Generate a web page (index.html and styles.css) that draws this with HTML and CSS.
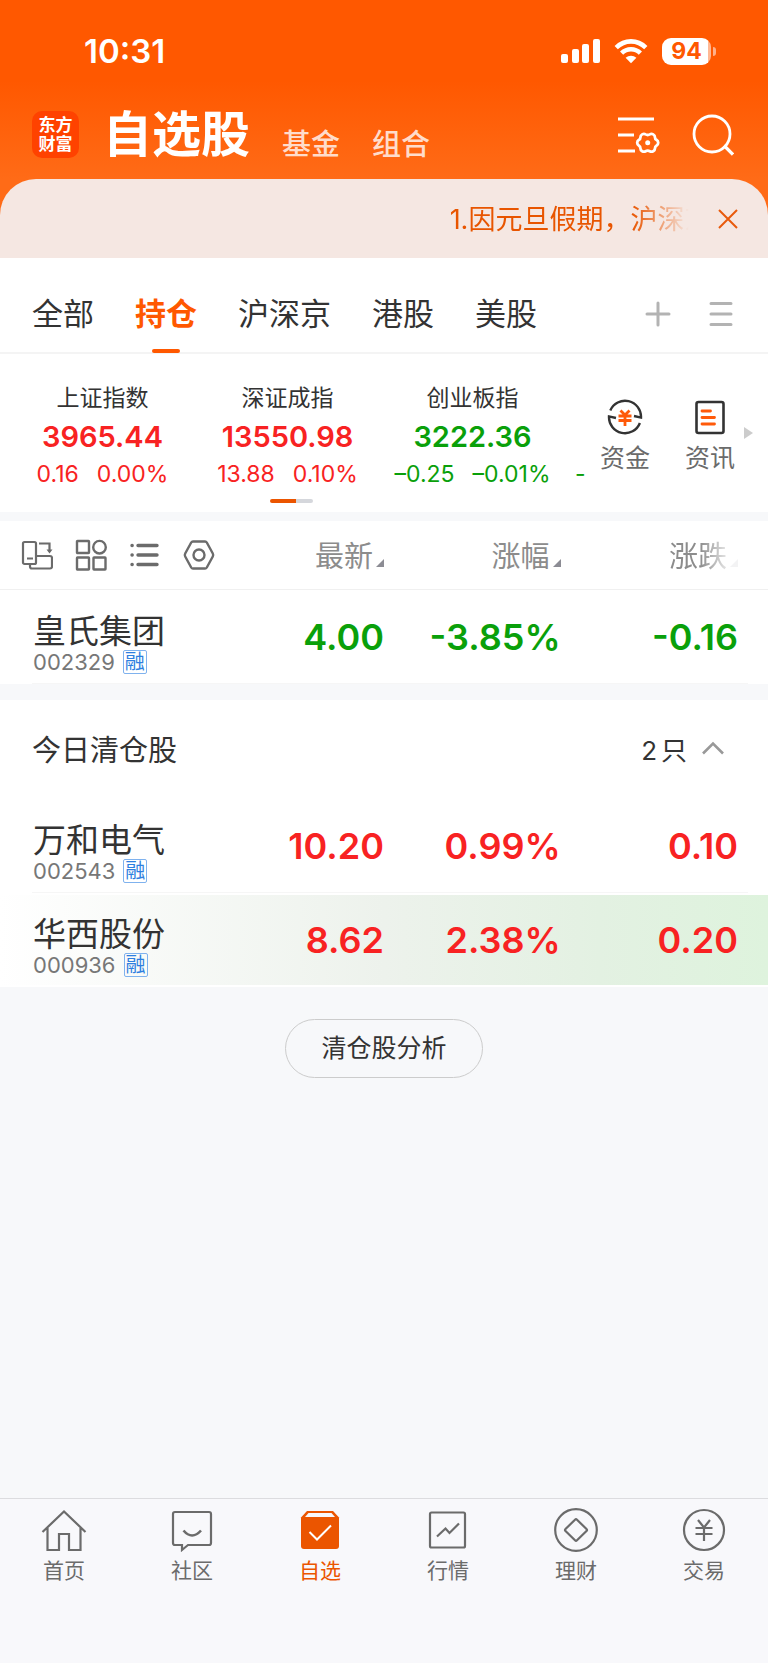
FILE: index.html
```
<!DOCTYPE html>
<html lang="zh-CN">

<head>
    <meta charset="UTF-8">
    <meta name="viewport" content="width=device-width, initial-scale=1">
    <title>自选股</title>
    <link rel="stylesheet" href="styles.css">
</head>

<body>
    <header class="header">
        <!-- 状态栏 -->
        <div class="status-bar">
            <span class="status-time">10:31</span>
            <div class="status-icons">
                <svg width="39" height="25" viewBox="0 0 39 25" fill="#fff">
                    <rect x="0" y="15" width="7" height="9" rx="2" />
                    <rect x="11" y="10" width="7" height="14" rx="2" />
                    <rect x="21" y="5" width="7" height="19" rx="2" />
                    <rect x="32" y="0" width="7" height="24" rx="2" />
                </svg>
                <svg width="34" height="25" viewBox="0 0 34 25" fill="none" stroke="#fff" stroke-width="4.6">
                    <path d="M2.2 8.6C10.6 .3 23.4 .3 31.8 8.6" />
                    <path d="M7.6 14.2C13 9 21 9 26.4 14.2" />
                    <path d="M17 24.2l-5.4-5.4c3.2-2.8 7.6-2.8 10.8 0z" fill="#fff" stroke="none" />
                </svg>
                <span class="battery"><span class="battery-level">94</span></span>
            </div>
        </div>

        <!-- 标题栏 -->
        <div class="title-bar">
            <a href="#" class="logo"><span>东方</span><span>财富</span></a>
            <h1 class="title">自选股</h1>
            <a href="#" class="title-link">基金</a>
            <a href="#" class="title-link">组合</a>
            <div class="title-actions">
                <button type="button" class="icon-btn" aria-label="设置">
                    <svg width="42" height="40" viewBox="0 0 42 40" fill="none" stroke="#fff" stroke-width="2.8">
                        <path d="M0 4h36M0 20h16M0 36h17" />
                        <path d="M40.200 27.800Q40.200 29.800 38.400 30.800Q37 31.600 37 33.200Q37 35.200 35.200 36.200Q33.400 37.200 31.800 36.200Q29.700 35 27.600 36.200Q26 37.200 24.200 36.200Q22.400 35.200 22.400 33.200Q22.400 31.600 21 30.800Q19.200 29.800 19.200 27.800Q19.200 25.800 21 24.800Q22.400 24 22.400 22.400Q22.400 20.400 24.200 19.400Q26 18.400 27.600 19.400Q29.700 20.600 31.800 19.400Q33.400 18.400 35.200 19.400Q37 20.400 37 22.400Q37 24 38.400 24.800Q40.200 25.800 40.200 27.800z" />
                        <circle cx="29.700" cy="27.800" r="2.500" fill="#fff" stroke="none" />
                    </svg>
                </button>
                <button type="button" class="icon-btn" aria-label="搜索">
                    <svg width="42" height="42" viewBox="0 0 42 42" fill="none" stroke="#fff" stroke-width="2.8">
                        <circle cx="20" cy="20" r="18" />
                        <path d="M32 31.500l9 9" stroke-width="3.200" />
                    </svg>
                </button>
            </div>
        </div>
    </header>

    <!-- 公告 -->
    <div class="notice-wrap">
        <div class="notice">
            <p class="notice-text">1.因元旦假期，沪深京</p>
            <button type="button" class="notice-close" aria-label="关闭">
                <svg width="20" height="20" viewBox="0 0 20 20" fill="none" stroke="#e85a0c" stroke-width="2">
                    <path d="M1 1l18 18M19 1L1 19" />
                </svg>
            </button>
        </div>
    </div>

    <!-- 分组 -->
    <nav class="groups">
        <a href="#" class="group">全部</a>
        <a href="#" class="group active">持仓</a>
        <a href="#" class="group">沪深京</a>
        <a href="#" class="group">港股</a>
        <a href="#" class="group">美股</a>
        <div class="group-actions">
            <button type="button" class="icon-btn" aria-label="添加分组">
                <svg width="26" height="26" viewBox="0 0 26 26" stroke="#b3b3b3" stroke-width="3" stroke-linecap="round">
                    <path d="M13 2v22M2 13h22" />
                </svg>
            </button>
            <button type="button" class="icon-btn" aria-label="管理分组">
                <svg width="24" height="26" viewBox="0 0 24 26" stroke="#b3b3b3" stroke-width="3" stroke-linecap="round">
                    <path d="M2 2.500h20M2 13h20M2 23.500h20" />
                </svg>
            </button>
        </div>
    </nav>

    <!-- 指数 -->
    <section class="market">
        <div class="indexes">
            <div class="index up">
                <span class="index-name">上证指数</span>
                <strong class="index-value">3965.44</strong>
                <span class="index-change"><span>0.16</span><span>0.00%</span></span>
            </div>
            <div class="index up">
                <span class="index-name">深证成指</span>
                <strong class="index-value">13550.98</strong>
                <span class="index-change"><span>13.88</span><span>0.10%</span></span>
            </div>
            <div class="index down">
                <span class="index-name">创业板指</span>
                <strong class="index-value">3222.36</strong>
                <span class="index-change"><span>–0.25</span><span>–0.01%</span></span>
            </div>
            <div class="index-next down">-</div>
            <span class="pager"></span>
        </div>
        <div class="shortcuts">
            <a href="#" class="shortcut">
                <svg width="36" height="36" viewBox="0 0 36 36" fill="none" stroke="#333" stroke-width="2.400">
                    <path d="M3.300 11.500A16 16 0 0 1 34 18.600l-7-1.600" />
                    <path d="M32.900 24A16 16 0 0 1 2 17.400l7 1.600" />
                    <path d="M13.500 11.500l4.500 4.500 4.500-4.500M11.500 17h13M11.500 21.500h13M18 16v11" stroke="#ff5a0a" stroke-width="2.800" />
                </svg>
                资金
            </a>
            <a href="#" class="shortcut">
                <svg width="36" height="36" viewBox="0 0 36 36" fill="none" stroke="#333" stroke-width="2.600">
                    <rect x="4.500" y="3" width="27" height="31" rx="2" />
                    <path d="M10 12h8.500M10 18.500h12.500M10 25h12.500" stroke="#ff5a0a" stroke-width="2.800" stroke-linecap="round" />
                </svg>
                资讯
            </a>
        </div>
        <span class="market-arrow"></span>
    </section>

    <!-- 股票列表 -->
    <table class="stocks">
        <thead>
            <tr>
                <th>
                    <div class="tools">
                        <button type="button" class="icon-btn" aria-label="横屏">
                            <svg width="32" height="32" viewBox="0 0 32 32" fill="none" stroke="#6b6b6b" stroke-width="2.200">
                                <rect x="2" y="3" width="13" height="22" rx="1.500" />
                                <path d="M6 19.500h6M9 25v2.500a2 2 0 0 0 2 2h18a2 2 0 0 0 2-2V19a2 2 0 0 0-2-2H15M18 4.500h10.500v8" />
                                <path d="M25.500 10.500h6l-3 4z" fill="#6b6b6b" stroke="none" />
                            </svg>
                        </button>
                        <button type="button" class="icon-btn" aria-label="宫格">
                            <svg width="32" height="32" viewBox="0 0 32 32" fill="none" stroke="#6b6b6b" stroke-width="2.400">
                                <rect x="2" y="2" width="12" height="12" rx=".5" />
                                <rect x="2" y="18.500" width="12" height="12" rx=".5" />
                                <rect x="18.500" y="18.500" width="12" height="12" rx=".5" />
                                <circle cx="24.500" cy="8.200" r="6.300" />
                            </svg>
                        </button>
                        <button type="button" class="icon-btn" aria-label="列表">
                            <svg width="32" height="32" viewBox="0 0 32 32" stroke="#6b6b6b" stroke-width="3.400" stroke-linecap="round">
                                <path d="M9 6.500h19M9 16h19M9 25.500h19M3 6.500h.2M3 16h.2M3 25.500h.2" />
                            </svg>
                        </button>
                        <button type="button" class="icon-btn" aria-label="列表设置">
                            <svg width="32" height="32" viewBox="0 0 32 32" fill="none" stroke="#6b6b6b" stroke-width="2.400" stroke-linejoin="round">
                                <path d="M10 2.500h12q1.200 0 1.800 1l6 11q.8 1.500 0 3l-6 11q-.6 1-1.800 1h-12q-1.200 0-1.800-1l-6-11q-.8-1.500 0-3l6-11q.6-1 1.800-1z" />
                                <circle cx="16" cy="16" r="5.500" />
                            </svg>
                        </button>
                    </div>
                </th>
                <th><button type="button" class="sort">最新</button></th>
                <th><button type="button" class="sort">涨幅</button></th>
                <th><button type="button" class="sort sort-fade">涨跌</button></th>
            </tr>
        </thead>
        <tbody>
            <tr class="stock down">
                <td>
                    <div class="stock-name">皇氏集团</div>
                    <div class="stock-code">002329<span class="tag">融</span></div>
                </td>
                <td>4.00</td>
                <td>-3.85%</td>
                <td>-0.16</td>
            </tr>
        </tbody>
        <tbody>
            <tr class="cleared">
                <th colspan="4">
                    <div class="cleared-head">
                        <span>今日清仓股</span>
                        <button type="button" class="cleared-toggle">
                            <span class="cleared-count"><span>2</span><span>只</span></span>
                            <svg width="22" height="14" viewBox="0 0 22 14" fill="none" stroke="#999" stroke-width="2.600">
                                <path d="M1 12.500l10-10 10 10" />
                            </svg>
                        </button>
                    </div>
                </th>
            </tr>
            <tr class="stock up">
                <td>
                    <div class="stock-name">万和电气</div>
                    <div class="stock-code">002543<span class="tag">融</span></div>
                </td>
                <td>10.20</td>
                <td>0.99%</td>
                <td>0.10</td>
            </tr>
            <tr class="stock up flash">
                <td>
                    <div class="stock-name">华西股份</div>
                    <div class="stock-code">000936<span class="tag">融</span></div>
                </td>
                <td>8.62</td>
                <td>2.38%</td>
                <td>0.20</td>
            </tr>
        </tbody>
    </table>

    <button type="button" class="analysis">清仓股分析</button>

    <!-- 底部导航 -->
    <nav class="tab-bar">
        <a href="#" class="tab">
            <svg width="46" height="46" viewBox="0 0 46 46" fill="none" stroke="#6b6b6b" stroke-width="2.200">
                <path d="M1.500 24L23 3.500 44.500 24M6.500 20v22h11.500V26h10v16h11.500V20" />
            </svg>
            首页
        </a>
        <a href="#" class="tab">
            <svg width="46" height="46" viewBox="0 0 46 46" fill="none" stroke="#6b6b6b" stroke-width="2.200">
                <path d="M6 4h34a2 2 0 0 1 2 2v29a2 2 0 0 1-2 2H19l-6 5v-5H6a2 2 0 0 1-2-2V6a2 2 0 0 1 2-2z" />
                <path d="M14.500 22.500q8.500 10 17.500 0" stroke-width="2.600" />
            </svg>
            社区
        </a>
        <a href="#" class="tab active">
            <svg width="46" height="46" viewBox="0 0 46 46" fill="none">
                <path d="M10 3h26l6 6.500V38a3 3 0 0 1-3 3H7a3 3 0 0 1-3-3V9.500z" fill="#eb5500" />
                <path d="M11.500 5h23l3.500 4H8z" fill="#f8f8fb" />
                <path d="M12.500 24l7.500 7.500 14-14" stroke="#fff" stroke-width="2" />
            </svg>
            自选
        </a>
        <a href="#" class="tab">
            <svg width="46" height="46" viewBox="0 0 46 46" fill="none" stroke="#6b6b6b" stroke-width="2.200">
                <rect x="5" y="4.500" width="35" height="35" rx="1.500" />
                <path d="M12 28.500l8.500-8 4 4.500 9.500-9.500" />
            </svg>
            行情
        </a>
        <a href="#" class="tab">
            <svg width="46" height="46" viewBox="0 0 46 46" fill="none" stroke="#6b6b6b" stroke-width="2.200">
                <circle cx="23" cy="22" r="20.800" />
                <path d="M22 11.700q1-1 2 0l9.500 9.300q1 1 0 2l-9.500 9.300q-1 1-2 0l-9.500-9.300q-1-1 0-2z" />
            </svg>
            理财
        </a>
        <a href="#" class="tab">
            <svg width="46" height="46" viewBox="0 0 46 46" fill="none" stroke="#6b6b6b" stroke-width="2.200">
                <circle cx="23" cy="22" r="20" />
                <path d="M17 12l6 7.500 6-7.500M14.500 20h17M14.500 26h17M23 19v14" />
            </svg>
            交易
        </a>
    </nav>
</body>

</html>
```
FILE: styles.css
```
/* 基础样式 */
* {
    margin: 0;
    padding: 0;
    box-sizing: border-box;
}

body {
    min-height: 100vh;
    display: flex;
    flex-direction: column;
    font-family: Inter, "Noto Sans CJK SC", sans-serif;
    color: #333;
    background-color: #f7f8fa;
}

a {
    color: inherit;
    text-decoration: none;
}

button {
    font: inherit;
    color: inherit;
    background: none;
    border: none;
    cursor: pointer;
}

svg {
    display: block;
}

.up {
    color: #f82222;
}

.down {
    color: #0aa00a;
}

/* 头部 */
.header {
    color: #fff;
    background: linear-gradient(#ff5800 45%, #ff6b17);
}

.status-bar {
    display: flex;
    align-items: center;
    justify-content: space-between;
    height: 102px;
    padding: 0 52px 0 84px;
}

.status-time {
    font-size: 33px;
    font-weight: 600;
}

.status-icons {
    display: flex;
    align-items: center;
    gap: 14px;
}

.battery {
    display: flex;
    align-items: center;
    gap: 2px;
}

.battery::after {
    content: "";
    width: 3px;
    height: 9px;
    border-radius: 0 4px 4px 0;
    background-color: #ffb08a;
}

.battery-level {
    width: 49px;
    height: 27px;
    border-radius: 9px;
    background: linear-gradient(90deg, #fff 94%, #ffb894 94%);
    color: #ff5800;
    font-size: 23px;
    font-weight: 700;
    line-height: 27px;
    text-align: center;
}

.title-bar {
    display: flex;
    align-items: center;
    height: 77px;
    padding: 0 34px 12px 32px;
}

.logo {
    display: flex;
    flex-direction: column;
    align-items: center;
    justify-content: center;
    width: 47px;
    height: 47px;
    margin-right: 24px;
    border-radius: 10px;
    background-color: #ff4200;
    font-size: 17px;
    font-weight: 700;
    line-height: 19px;
}

.title {
    font-size: 49px;
    font-weight: 700;
    line-height: 60px;
}

.title-link {
    align-self: flex-end;
    margin-left: 32px;
    font-size: 29px;
    font-weight: 500;
    line-height: 44px;
    color: #ffdccb;
}

.title-actions {
    display: flex;
    align-items: center;
    gap: 32px;
    margin-left: auto;
}

/* 公告 */
.notice-wrap {
    background: linear-gradient(#ff6b17 50%, #fff 50%);
}

.notice {
    display: flex;
    align-items: center;
    justify-content: flex-end;
    gap: 19px;
    height: 79px;
    padding-right: 20px;
    border-radius: 36px 36px 0 0;
    background-color: #f5e7e2;
}

.notice-text {
    width: 32%;
    padding-top: 2px;
    overflow: hidden;
    white-space: nowrap;
    font-size: 27px;
    line-height: 40px;
    color: #e85500;
    -webkit-mask-image: linear-gradient(90deg, #000 76%, transparent);
    mask-image: linear-gradient(90deg, #000 76%, transparent);
}

.notice-close {
    display: flex;
    align-items: center;
    justify-content: center;
    width: 40px;
    height: 40px;
}

/* 分组 */
.groups {
    display: flex;
    gap: 41px;
    padding: 0 35px 0 32px;
    border-bottom: 2px solid #f4f4f4;
    background-color: #fff;
}

.group {
    position: relative;
    padding: 33px 0 15px;
    font-size: 31px;
    line-height: 46px;
}

.group.active {
    color: #ff5800;
    font-weight: 700;
}

/* 选中分组的下划线 */
.group.active::after {
    content: "";
    position: absolute;
    left: 50%;
    bottom: -1px;
    width: 28px;
    height: 4px;
    margin-left: -14px;
    border-radius: 2px;
    background-color: #ff5800;
}

.group-actions {
    display: flex;
    align-items: center;
    gap: 38px;
    margin-left: auto;
    padding-top: 18px;
}

/* 指数 */
.market {
    display: flex;
    align-items: center;
    height: 158px;
    padding-right: 15px;
    background-color: #fff;
}

.indexes {
    position: relative;
    flex: 1;
    display: flex;
    height: 100%;
    padding: 26px 0 0 10px;
    overflow: hidden;
}

.index {
    flex: 0 0 185px;
    display: flex;
    flex-direction: column;
    align-items: center;
}

.index-name {
    font-size: 23px;
    line-height: 37px;
    color: #333;
}

.index-value {
    font-size: 29px;
    font-weight: 600;
    line-height: 39px;
}

.index-change {
    display: flex;
    gap: 18px;
    font-size: 23px;
    line-height: 36px;
}

.index-next {
    align-self: flex-end;
    margin-bottom: 20px;
    margin-left: 10px;
    font-size: 23px;
    line-height: 36px;
}

/* 指数分页 */
.pager {
    position: absolute;
    left: 270px;
    bottom: 9px;
    width: 43px;
    height: 4px;
    border-radius: 2px;
    background: linear-gradient(90deg, #eb5500 60%, #d5d7dc 60%);
}

.shortcuts {
    display: flex;
    gap: 35px;
    padding: 8px 9px 0 14px;
}

.shortcut {
    display: flex;
    flex-direction: column;
    align-items: center;
    gap: 5px;
    width: 50px;
    font-size: 25px;
    line-height: 36px;
    color: #6b6b6b;
}

.market-arrow {
    border: 6px solid transparent;
    border-left: 9px solid #ccc;
    border-right: none;
}

/* 股票列表 */
.stocks {
    width: 100%;
    table-layout: fixed;
    border-spacing: 0;
    border-top: 9px solid #f7f8fa;
    background-color: #fff;
}

.stocks th {
    font-weight: 400;
    text-align: right;
}

.stocks thead th {
    width: 23%;
    height: 69px;
    border-bottom: 1px solid #f0f0f0;
}

.stocks thead th:first-child {
    width: 27%;
}

.stocks thead th:last-child {
    width: 27%;
    padding-right: 30px;
}

.tools {
    display: flex;
    gap: 22px;
    padding-left: 21px;
}

.sort {
    padding-top: 3px;
    font-size: 29px;
    line-height: 42px;
    color: #8c8c8c;
}

.sort::after {
    content: "";
    display: inline-block;
    margin-left: 3px;
    border-left: 8px solid transparent;
    border-bottom: 8px solid #8c8c94;
}

.sort-fade {
    -webkit-mask-image: linear-gradient(90deg, #000 45%, rgba(0, 0, 0, 0.1) 90%);
    mask-image: linear-gradient(90deg, #000 45%, rgba(0, 0, 0, 0.1) 90%);
}

.stock {
    background: linear-gradient(#f6f6f6, #f6f6f6) 32px 100% / calc(100% - 52px) 1px no-repeat;
}

.stock td {
    height: 94px;
    text-align: right;
    font-size: 36px;
    font-weight: 600;
}

.stock td:first-child {
    padding-top: 12px;
    padding-left: 33px;
    text-align: left;
    font-weight: 400;
}

.stock td:last-child {
    padding-right: 30px;
}

.stock-name {
    font-size: 33px;
    line-height: 38px;
    color: #333;
}

.stock-code {
    display: flex;
    align-items: center;
    gap: 8px;
    font-size: 22px;
    line-height: 24px;
    color: #777;
}

.tag {
    width: 24px;
    height: 24px;
    border: 1px solid #7fb2ee;
    border-radius: 2px;
    font-size: 20px;
    line-height: 22px;
    text-align: center;
    color: #2e7fe0;
}

/* 价格变动时的闪烁背景 */
.flash {
    background: linear-gradient(90deg, #fff, #edf2ec 50%, #e3f1e2 78%, #def3dd) 0 2px / 100% 90px no-repeat;
}

.cleared th {
    border-top: 16px solid #f7f8fa;
}

.cleared-head {
    display: flex;
    align-items: center;
    justify-content: space-between;
    height: 99px;
    padding: 0 44px 3px 32px;
    font-size: 29px;
}

.cleared-toggle {
    display: flex;
    align-items: center;
    gap: 15px;
    font-size: 26px;
}

.cleared-count {
    display: flex;
    align-items: baseline;
    gap: 4px;
}

.analysis {
    align-self: center;
    margin: 32px 0;
    padding: 0 35px;
    border: 1px solid #ccc;
    border-radius: 30px;
    font-size: 25px;
    line-height: 57px;
}

/* 底部导航 */
.tab-bar {
    display: flex;
    margin-top: auto;
    padding: 9px 0 76px;
    border-top: 1px solid #dcdcdf;
    background-color: #f8f8fb;
}

.tab {
    flex: 1;
    display: flex;
    flex-direction: column;
    align-items: center;
    gap: 1px;
    font-size: 21px;
    line-height: 32px;
    color: #6b6b6b;
}

.tab.active {
    color: #eb5500;
}
```
